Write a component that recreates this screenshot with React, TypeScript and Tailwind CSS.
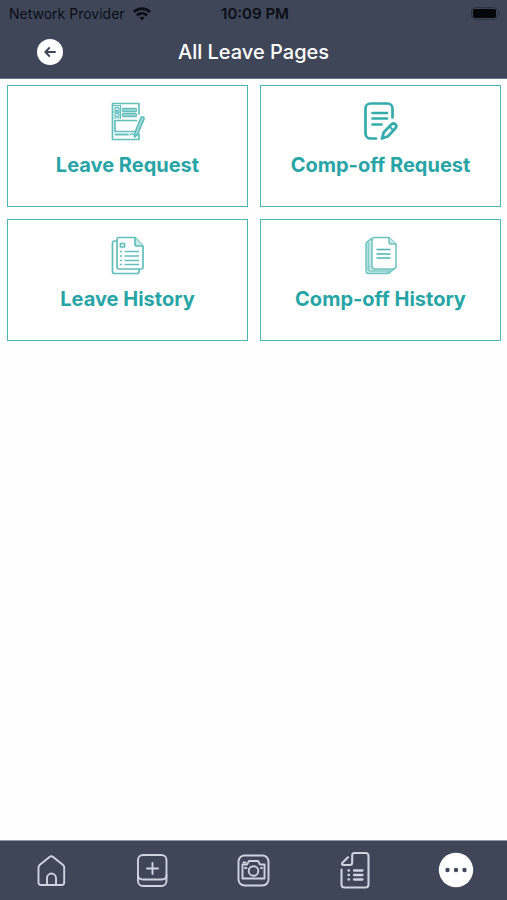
import type { ReactNode } from "react";

interface LeavePage {
    label: string;
    icon: ReactNode;
}

const pages: LeavePage[] = [
    { label: "Leave Request", icon: <FormIcon /> },
    { label: "Comp-off Request", icon: <NoteEditIcon /> },
    { label: "Leave History", icon: <DocumentsIcon /> },
    { label: "Comp-off History", icon: <StackIcon /> },
];

const tabs: LeavePage[] = [
    { label: "Home", icon: <HomeIcon /> },
    { label: "Add", icon: <AddIcon /> },
    { label: "Camera", icon: <CameraIcon /> },
    { label: "Reports", icon: <ReportIcon /> },
    { label: "More", icon: <MoreIcon /> },
];

export default function App() {
    return (
        <div className="min-h-screen flex flex-col bg-[#fefefe] font-['Inter',sans-serif]">
            <header className="bg-[#3f4658] border-b border-[#6f7589]">
                <StatusBar />
                <div className="grid grid-cols-[100px_1fr_100px] items-center h-[50px] pb-0.5">
                    <button aria-label="Back" className="justify-self-center">
                        <svg width="28" height="28" viewBox="0 0 28 28" fill="none">
                            <circle cx="14" cy="14" r="13" fill="#fff" />
                            <path d="M19 14H9.500M13.300 10L9.300 14l4 4" stroke="#3f4658" strokeWidth="1.900" strokeLinecap="round" strokeLinejoin="round" />
                        </svg>
                    </button>
                    <h1 className="text-center text-xl font-medium text-white">All Leave Pages</h1>
                </div>
            </header>

            {/* Leave pages */}
            <main className="flex-1 pl-[7px] pr-1.5 pt-1.5">
                <div className="grid grid-cols-2 gap-3">
                    {pages.map((page) => (
                        <button
                            key={page.label}
                            className="flex flex-col items-center border border-[#4db6b4] bg-white pt-[15px] pb-[27px]"
                        >
                            {page.icon}
                            <span className="mt-2.5 text-xl leading-7 font-bold text-[#27a5a6]">{page.label}</span>
                        </button>
                    ))}
                </div>
            </main>

            {/* Tab bar */}
            <nav className="grid grid-cols-5 border-t border-[#9298a8] bg-[#3f4658] pt-2.5 pb-[11px]">
                {tabs.map((tab) => (
                    <button key={tab.label} aria-label={tab.label} className="flex justify-center">
                        {tab.icon}
                    </button>
                ))}
            </nav>
        </div>
    );
}

function StatusBar() {
    return (
        <div className="grid grid-cols-3 items-center h-7 pl-[9px] pr-1.5 text-[#0b0e15]">
            <div className="flex items-center gap-2 text-sm">
                <span className="whitespace-nowrap">Network Provider</span>
                <svg className="shrink-0" width="18" height="14" viewBox="0 0 18 14" fill="none" stroke="#0b0e15" strokeWidth="2.800">
                    <path d="M.9 5C5.600.6 12.400.6 17.100 5" />
                    <path d="M3.900 8.400c3-2.700 7.200-2.700 10.200 0" />
                    <path d="M9 13.500l-2.500-2.900c1.500-1.200 3.500-1.200 5 0z" fill="#0b0e15" stroke="none" />
                </svg>
            </div>
            <span className="text-center text-[15px] font-semibold">10:09 PM</span>
            <svg className="justify-self-end" width="31" height="14" viewBox="0 0 31 14">
                <rect x="1.500" y=".5" width="26" height="12" rx="4" fill="none" stroke="#2c3240" />
                <rect x="3" y="2" width="23" height="9" rx="2" fill="#05070a" />
                <path d="M29 4.500v4c1.500-.6 1.500-3.400 0-4z" fill="#2c3240" />
            </svg>
        </div>
    );
}

function FormIcon() {
    return (
        <svg width="40" height="40" viewBox="0 0 40 40" fill="none" stroke="#62bfbc" strokeLinejoin="round" strokeLinecap="round">
            <path d="M31 13V2.500H4.500v36H31V33" strokeWidth="1.700" />
            <path d="M5.500 4.500h6M5.500 17h6" strokeWidth="1.200" />
            <g strokeWidth="1.300">
                <rect x="7" y="6.500" width="4" height="3" rx="1" />
                <rect x="7" y="12.500" width="4" height="3" rx="1" />
                <rect x="14.500" y="7.500" width="14" height="3" rx="1" fill="#a5dad8" />
                <rect x="14.500" y="12.500" width="14" height="3" rx="1" fill="#a5dad8" />
                <path d="M6 11h6M12.500 4.500V17" />
            </g>
            <path d="M27 30.500H7v-11h21.500" strokeWidth="1.700" />
            <path d="M7.500 33.500h12.500" strokeWidth="2" />
            <path d="M22 34l2-1.500 2 1.500" strokeWidth="1.200" />
            <path d="M33 16.500c1.500-1.500 3.500-.5 3 1.500L29.500 33.500 26.500 36l.3-4z" fill="#a5dad8" strokeWidth="1.700" />
        </svg>
    );
}

function NoteEditIcon() {
    return (
        <svg width="40" height="40" viewBox="0 0 40 40" fill="none" stroke="#35acab" strokeWidth="2.700" strokeLinecap="round" strokeLinejoin="round">
            <path d="M15 37.500H9.500a5 5 0 0 1-5-5v-25a5 5 0 0 1 5-5h17a5 5 0 0 1 5 5V16.500" />
            <path d="M11.500 12h14.500M11.500 17.500h14.500M11.500 23.500h9" />
            <path d="M21 37.500l1.800-6.200L30.300 23.500c3-2.500 6.500.8 4.200 3.800L27 35.200z" />
            <path d="M29.500 26.500l2.500 2.500" strokeWidth="1.800" />
        </svg>
    );
}

function DocumentsIcon() {
    return (
        <svg width="40" height="40" viewBox="0 0 40 40" fill="none" stroke="#62bfbc" strokeWidth="1.700" strokeLinejoin="round">
            <path d="M9 6H6.500C5 6 4.500 7 4.500 8v28.500c0 1.500.5 2 2 2H29c1.500 0 2-.8 2-2V34" />
            <path d="M27 2.500H10.500C9.500 2.500 9 3 9 4v28.500c0 1 .5 1.500 1.500 1.500h23c1 0 1.500-.5 1.500-1.500V11z" />
            <path d="M27 2.500V9c0 1.500.5 2 2 2h6" fill="#c9eae7" />
            <rect x="12.500" y="8.500" width="4" height="3.500" />
            <path d="M12 16.500h2M16.500 16.500H31M12 21h2M16.500 21H31M12 25.500h2M16.500 25.500H31M12 29.500h2M16.500 29.500H31" strokeWidth="1.500" />
        </svg>
    );
}

function StackIcon() {
    return (
        <svg width="40" height="40" viewBox="0 0 40 40" fill="none" stroke="#6dc3bf" strokeWidth="1.500" strokeLinejoin="round">
            <path d="M11 3L6 7Q5 8 5 9.500V36q0 2.500 2.500 2.500H26q2 0 3-1l6-5.500" fill="#c9eae7" />
            <path d="M7.500 7.500v26q0 2.500 2.500 2.500h18M6 34l3-3M26 38.500l3-3.500" stroke="#86ceca" strokeWidth="1.700" />
            <path d="M28 2.500H14q-3 0-3 3V31q0 3 3 3h18q3 0 3-3V9z" fill="#fff" />
            <path d="M28 2.500V7q0 2 2 2h5" fill="#c9eae7" />
            <path d="M15.500 14.500h14M15.500 19h14M15.500 23h14" stroke="#4bb5b3" strokeWidth="1.400" />
        </svg>
    );
}

function HomeIcon() {
    return (
        <svg width="38" height="38" viewBox="0 0 38 38" fill="none" stroke="#cdd3df" strokeWidth="1.900" strokeLinecap="round" strokeLinejoin="round">
            <path d="M9 34a2.500 2.500 0 0 1-2.500-2.500v-15c0-1.200.5-2 1.400-2.700L17.500 6c1.200-1 2.400-1 3.600 0l9.700 7.800c.9.700 1.400 1.500 1.400 2.700v15a2.500 2.500 0 0 1-2.500 2.500z" />
            <path d="M15 34v-7a4.500 4.500 0 0 1 9 0V34" />
        </svg>
    );
}

function AddIcon() {
    return (
        <svg width="38" height="38" viewBox="0 0 38 38" fill="none" stroke="#cdd3df" strokeWidth="1.900" strokeLinecap="round">
            <rect x="5" y="4" width="28.500" height="31" rx="5" />
            <path d="M5 24c0 3 2 4.500 5 4.500h18.500c3 0 5-1.500 5-4.500M14 17.500h11M19.500 12v11" />
        </svg>
    );
}

function CameraIcon() {
    return (
        <svg width="38" height="38" viewBox="0 0 38 38" fill="none" stroke="#cdd3df" strokeWidth="1.900" strokeLinejoin="round">
            <rect x="4.500" y="4.500" width="30" height="30" rx="6" />
            <path d="M8.500 13.500h4.500l2-3.500h9l2 3.500h4.500v14H8.500z" />
            <circle cx="19.500" cy="20" r="4.800" />
            <path d="M9.500 11.500h2M11 17h1.500M27 17h1" strokeLinecap="round" />
        </svg>
    );
}

function ReportIcon() {
    return (
        <svg width="38" height="38" viewBox="0 0 38 38" fill="none" stroke="#cdd3df" strokeWidth="2.100" strokeLinecap="round" strokeLinejoin="round">
            <path d="M5.500 18.500v15c0 2 1 3 3 3h21c2 0 3-1 3-3V5c0-2-1-3-3-3H18.500c-1.500 0-2.300.8-2.300 2.300v7.200c0 1.500-.8 2.500-2.300 2.500H7.500c-1.500 0-2-1.200-1-2.300L12 6.200" />
            <path d="M12.500 19.500h.5M18 19.500h8.500M12.500 24h.5M18 24h8.500M12.500 28.500h.5M18 28.500h8.500" strokeWidth="2.300" />
        </svg>
    );
}

function MoreIcon() {
    return (
        <svg width="38" height="38" viewBox="0 0 38 38">
            <circle cx="19" cy="19" r="17.200" fill="#fff" />
            <g fill="#3f4658">
                <circle cx="10.500" cy="19" r="2.200" />
                <circle cx="19" cy="19" r="2.200" />
                <circle cx="27.500" cy="19" r="2.200" />
            </g>
        </svg>
    );
}
